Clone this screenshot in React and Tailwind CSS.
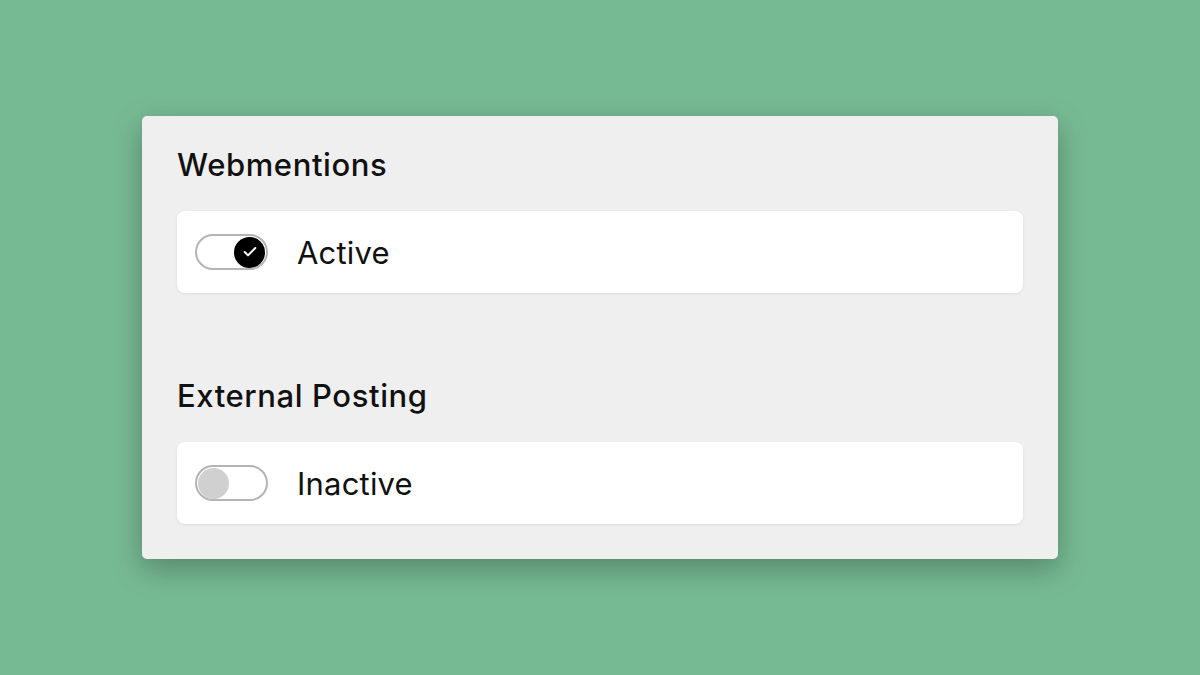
import { Check } from "lucide-react";

const Toggle = ({ on }) => (
  <div className="flex h-[36px] w-[73px] shrink-0 items-center rounded-full border-2 border-[#b4b4b4] bg-white px-[1px]">
    {on ? (
      <div className="ml-auto flex h-[31px] w-[31px] items-center justify-center rounded-full bg-black">
        <Check className="h-[16px] w-[16px] text-white" strokeWidth={3} />
      </div>
    ) : (
      <div className="h-[31px] w-[31px] rounded-full bg-[#d0d0d0]" />
    )}
  </div>
);

const Setting = ({ title, on, label }) => (
  <section>
    <h2 className="h-[36px] text-[31px] font-medium leading-[36px] tracking-[0.6px] text-[#111]">{title}</h2>
    <div className="mt-[28px] flex h-[82px] items-center gap-[29px] rounded-[8px] bg-white px-[18px] shadow-[0_1px_3px_rgba(0,0,0,0.08)]">
      <Toggle on={on} />
      <span className="text-[31px] leading-none tracking-[0.2px] text-[#111]">{label}</span>
    </div>
  </section>
);

export default function App() {
  return (
    <div
      className="flex h-[675px] w-[1200px] items-start justify-center bg-[#76ba93] pt-[116px]"
      style={{ fontFamily: "Inter, 'Noto Sans', sans-serif" }}
    >
      <div className="flex w-[916px] flex-col gap-[85px] rounded-[5px] bg-[#efefef] px-[35px] pb-[35px] pt-[31px] shadow-[0_10px_30px_rgba(0,0,0,0.28)]">
        <Setting title="Webmentions" on label="Active" />
        <Setting title="External Posting" on={false} label="Inactive" />
      </div>
    </div>
  );
}
